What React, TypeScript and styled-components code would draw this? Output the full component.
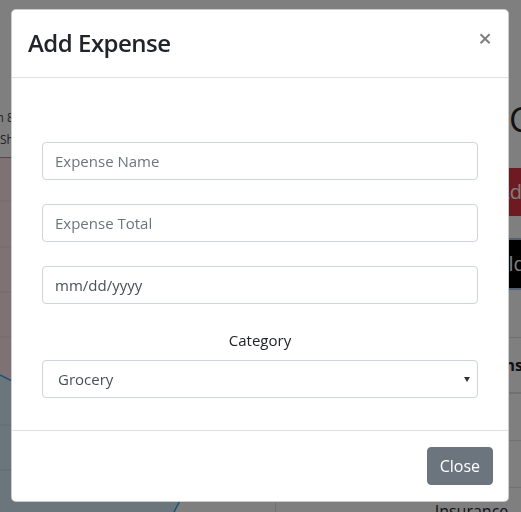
import React from "react";
import styled, { createGlobalStyle } from "styled-components";

const GlobalStyle = createGlobalStyle`
  html, body {
    margin: 0;
    padding: 0;
    overflow: hidden;
    background: #ffffff;
    font-family: "Open Sans", "Noto Sans", "Liberation Sans", sans-serif;
    color: #212529;
  }
  * {
    box-sizing: border-box;
  }
`;

const categories = ["Grocery", "Rent", "Utilities", "Insurance", "Other"];

const App: React.FC = () => {
  return (
    <>
      <GlobalStyle />
      <Page>
        <ChartPanel>
          <Legend>
            <LegendLabel indent={-14}>Jun 8 – Jul 8</LegendLabel>
            <LegendLabel indent={0}>Shopping</LegendLabel>
          </Legend>
          <svg width="275" height="355" viewBox="0 0 275 355">
            <polygon
              points="0,0 275,0 275,170 205,322 0,218"
              fill="#ffe4ea"
            />
            <polygon
              points="0,218 205,322 183,338 174,355 0,355"
              fill="#d6eaf9"
            />
            {[44, 90, 135, 180, 268, 313].map((y) => (
              <line
                key={y}
                x1="0"
                x2="275"
                y1={y}
                y2={y}
                stroke="rgba(0,0,0,0.08)"
                strokeWidth="1"
              />
            ))}
            <line x1="0" x2="275" y1="0.5" y2="0.5" stroke="#ff6384" strokeWidth="1" />
            <polyline
              points="0,218 205,322 183,338 174,355"
              fill="none"
              stroke="#36a2eb"
              strokeWidth="1.5"
            />
          </svg>
        </ChartPanel>
        <MainPanel>
          <PageTitle>Categories</PageTitle>
          <ActionButton tone="danger" offset={205}>
            Add Category
          </ActionButton>
          <ActionButton tone="dark" offset={201}>
            Old Expenses
          </ActionButton>
          <Table>
            <thead>
              <tr>
                <HeadCell>Transactions</HeadCell>
                <HeadCell>Amount</HeadCell>
              </tr>
            </thead>
            <tbody>
              <tr>
                <Cell>Grocery</Cell>
                <Cell>$120</Cell>
              </tr>
              <tr>
                <Cell>Rent</Cell>
                <Cell>$900</Cell>
              </tr>
              <tr>
                <Cell>Insurance</Cell>
                <Cell>$80</Cell>
              </tr>
            </tbody>
          </Table>
        </MainPanel>
      </Page>

      <Backdrop />

      <ModalWrap>
        <ModalContent>
          <ModalHeader>
            <ModalTitle>Add Expense</ModalTitle>
            <CloseX type="button" aria-label="Close">
              ×
            </CloseX>
          </ModalHeader>
          <ModalBody>
            <Field type="text" placeholder="Expense Name" />
            <Field type="text" placeholder="Expense Total" />
            <Field type="text" placeholder="mm/dd/yyyy" dateLike />
            <FieldLabel>Category</FieldLabel>
            <SelectWrap>
              <Select defaultValue="Grocery">
                {categories.map((c) => (
                  <option key={c} value={c}>
                    {c}
                  </option>
                ))}
              </Select>
            </SelectWrap>
          </ModalBody>
          <ModalFooter>
            <SecondaryButton type="button">Close</SecondaryButton>
          </ModalFooter>
        </ModalContent>
      </ModalWrap>
    </>
  );
};

const Page = styled.div`
  display: grid;
  grid-template-columns: 275px 1fr;
  width: 900px;
  min-height: 512px;
`;

const ChartPanel = styled.div`
  display: flex;
  flex-direction: column;
  svg {
    display: block;
  }
`;

const Legend = styled.div`
  height: 157px;
  padding-top: 107px;
  display: flex;
  flex-direction: column;
`;

const LegendLabel = styled.span<{ indent: number }>`
  font-size: 12px;
  line-height: 22px;
  color: #444;
  white-space: nowrap;
  margin-left: ${(p) => p.indent}px;
`;

const MainPanel = styled.div`
  display: flex;
  flex-direction: column;
  align-items: flex-start;
  padding-top: 99px;
`;

const PageTitle = styled.h1`
  margin: 0 0 28px 234px;
  font-size: 34px;
  font-weight: 500;
  line-height: 1.2;
  color: #212529;
`;

const ActionButton = styled.button<{ tone: "danger" | "dark"; offset: number }>`
  margin: 0 0 24px ${(p) => p.offset}px;
  height: 48px;
  padding: 8px 16px;
  font-family: inherit;
  font-size: 20px;
  line-height: 1.5;
  color: #fff;
  border-radius: 5px;
  border: 1px solid ${(p) => (p.tone === "danger" ? "#dc3545" : "#000")};
  background: ${(p) => (p.tone === "danger" ? "#dc3545" : "#000")};
  box-shadow: ${(p) => (p.tone === "dark" ? "0 0 0 2px #a9c3e6" : "none")};
`;

const Table = styled.table`
  margin-top: 25px;
  width: 560px;
  border-collapse: collapse;
  border: 1px solid #dee2e6;
`;

const HeadCell = styled.th`
  height: 56px;
  padding: 12px;
  font-size: 16px;
  font-weight: 700;
  text-align: center;
  border: 1px solid #dee2e6;
  border-bottom-width: 2px;
  &:first-child {
    width: 392px;
  }
`;

const Cell = styled.td`
  height: 45px;
  padding: 12px;
  font-size: 16px;
  text-align: center;
  border: 1px solid #dee2e6;
`;

const Backdrop = styled.div`
  position: fixed;
  inset: 0;
  background: rgba(0, 0, 0, 0.5);
`;

const ModalWrap = styled.div`
  position: fixed;
  inset: 0;
  padding: 9px 0 0 11px;
`;

const ModalContent = styled.div`
  width: 498px;
  display: flex;
  flex-direction: column;
  background: #fff;
  border: 1px solid rgba(0, 0, 0, 0.2);
  border-radius: 5px;
`;

const ModalHeader = styled.div`
  display: flex;
  align-items: flex-start;
  justify-content: space-between;
  padding: 15px 16px 16px;
  border-bottom: 1px solid #dee2e6;
`;

const ModalTitle = styled.h4`
  margin: 0;
  font-size: 24px;
  font-weight: 600;
  letter-spacing: -0.5px;
  line-height: 1.5;
  color: #212529;
`;

const CloseX = styled.button`
  margin: -15px -16px -16px auto;
  padding: 16px;
  background: transparent;
  border: 0;
  font-family: inherit;
  font-size: 24px;
  font-weight: 600;
  line-height: 1;
  color: #000;
  opacity: 0.5;
`;

const ModalBody = styled.div`
  display: flex;
  flex-direction: column;
  padding: 64px 30px 32px;
  border-bottom: 1px solid #dee2e6;
`;

const Field = styled.input<{ dateLike?: boolean }>`
  display: block;
  width: 100%;
  height: 38px;
  margin-bottom: 24px;
  padding: 6px 12px;
  font-family: inherit;
  font-size: 15px;
  line-height: 1.5;
  color: #495057;
  background: #fff;
  border: 1px solid #ced4da;
  border-radius: 4px;
  outline: none;
  &::placeholder {
    color: ${(p) => (p.dateLike ? "#495057" : "#6c757d")};
    opacity: 1;
  }
`;

const FieldLabel = styled.label`
  display: block;
  margin-bottom: 8px;
  font-size: 15px;
  line-height: 24px;
  text-align: center;
  color: #212529;
`;

const SelectWrap = styled.div`
  position: relative;
  &::after {
    content: "";
    position: absolute;
    right: 8px;
    top: 17px;
    border-left: 3.5px solid transparent;
    border-right: 3.5px solid transparent;
    border-top: 5px solid #333;
    pointer-events: none;
  }
`;

const Select = styled.select`
  display: block;
  width: 100%;
  height: 38px;
  padding: 6px 24px 6px 15px;
  font-family: inherit;
  font-size: 15px;
  line-height: 1.5;
  color: #495057;
  background: #fff;
  border: 1px solid #ced4da;
  border-radius: 4px;
  appearance: none;
  -webkit-appearance: none;
  outline: none;
`;

const ModalFooter = styled.div`
  display: flex;
  justify-content: flex-end;
  padding: 16px 15px 16px 16px;
`;

const SecondaryButton = styled.button`
  height: 38px;
  padding: 6px 12px;
  font-family: inherit;
  font-size: 16px;
  line-height: 1.5;
  color: #fff;
  background: #6c757d;
  border: 1px solid #6c757d;
  border-radius: 4px;
`;

export default App;
